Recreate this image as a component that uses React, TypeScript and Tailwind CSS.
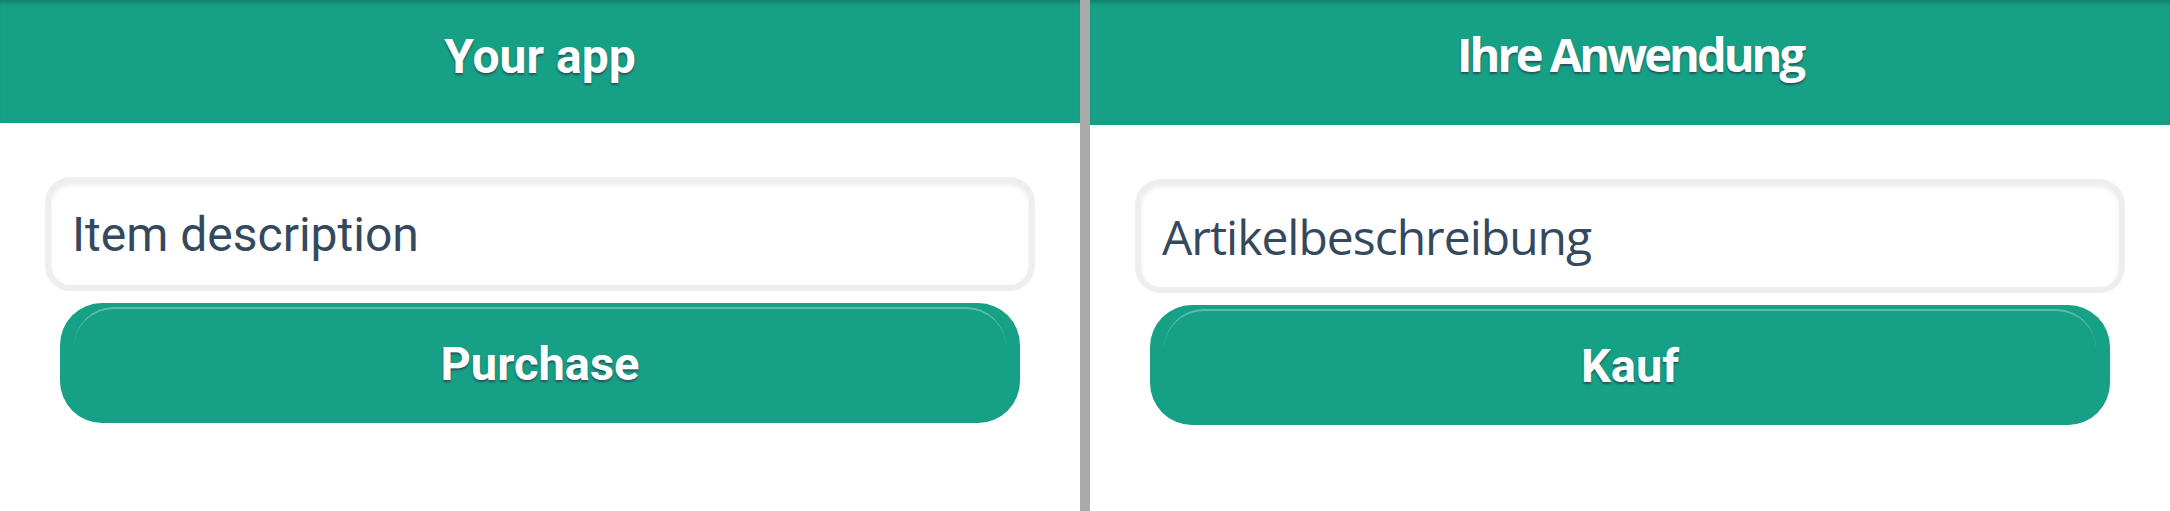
import React from 'react';

interface PanelProps {
  title: string;
  placeholder: string;
  action: string;
  titleFont: string;
  inputFont: string;
  headerH: string;
  titleClass: string;
  inputClass: string;
}

const shadow = '[text-shadow:0_2px_2px_rgba(44,62,80,0.75)]';

const Panel: React.FC<PanelProps> = ({ title, placeholder, action, titleFont, inputFont, headerH, titleClass, inputClass }) => {
  return (
    <div className="flex-1 flex flex-col bg-white">
      <div
        className={`${headerH} bg-[#16a085] flex justify-center shadow-[inset_0_5px_5px_-3px_rgba(0,0,0,0.25)]`}
      >
        <h1 className={`${titleFont} ${titleClass} font-bold text-white leading-none ${shadow}`}>{title}</h1>
      </div>

      <div className="px-[45px] pt-[54px] flex flex-col">
        <input
          type="text"
          readOnly
          value={placeholder}
          className={`h-[114px] w-full px-[21px] bg-white border-[6px] border-[#eeeeee] rounded-[26px] shadow-[inset_0_2px_4px_rgba(0,0,0,0.08)] outline-none text-[#34495e] ${inputFont} ${inputClass}`}
        />
        <button className="relative mt-[12px] mx-[15px] h-[120px] rounded-[42px] bg-[#16a085] text-white font-bold text-[47px] leading-none font-['Roboto',sans-serif]">
          <span className="absolute left-[14px] right-[14px] top-[4px] h-[40px] rounded-t-[40px] border-t-2 border-white/30" />
          <span className={`relative ${shadow}`}>{action}</span>
        </button>
      </div>
    </div>
  );
};

export default function App() {
  return (
    <div className="w-[2170px] h-[511px] flex bg-white overflow-hidden">
      <Panel
        title="Your app"
        placeholder="Item description"
        action="Purchase"
        headerH="h-[123px]"
        titleFont="font-['Roboto',sans-serif]"
        titleClass="text-[48px] pt-[33px]"
        inputFont="font-['Roboto',sans-serif]"
        inputClass="text-[48px]"
      />
      <div className="w-[10px] bg-[#aaaaaa] shrink-0" />
      <Panel
        title="Ihre Anwendung"
        placeholder="Artikelbeschreibung"
        action="Kauf"
        headerH="h-[125px]"
        titleFont="font-['Open_Sans',sans-serif]"
        titleClass="text-[47px] tracking-[-3px] pt-[31px]"
        inputFont="font-['Open_Sans',sans-serif]"
        inputClass="text-[48px] tracking-[-1px]"
      />
    </div>
  );
}
